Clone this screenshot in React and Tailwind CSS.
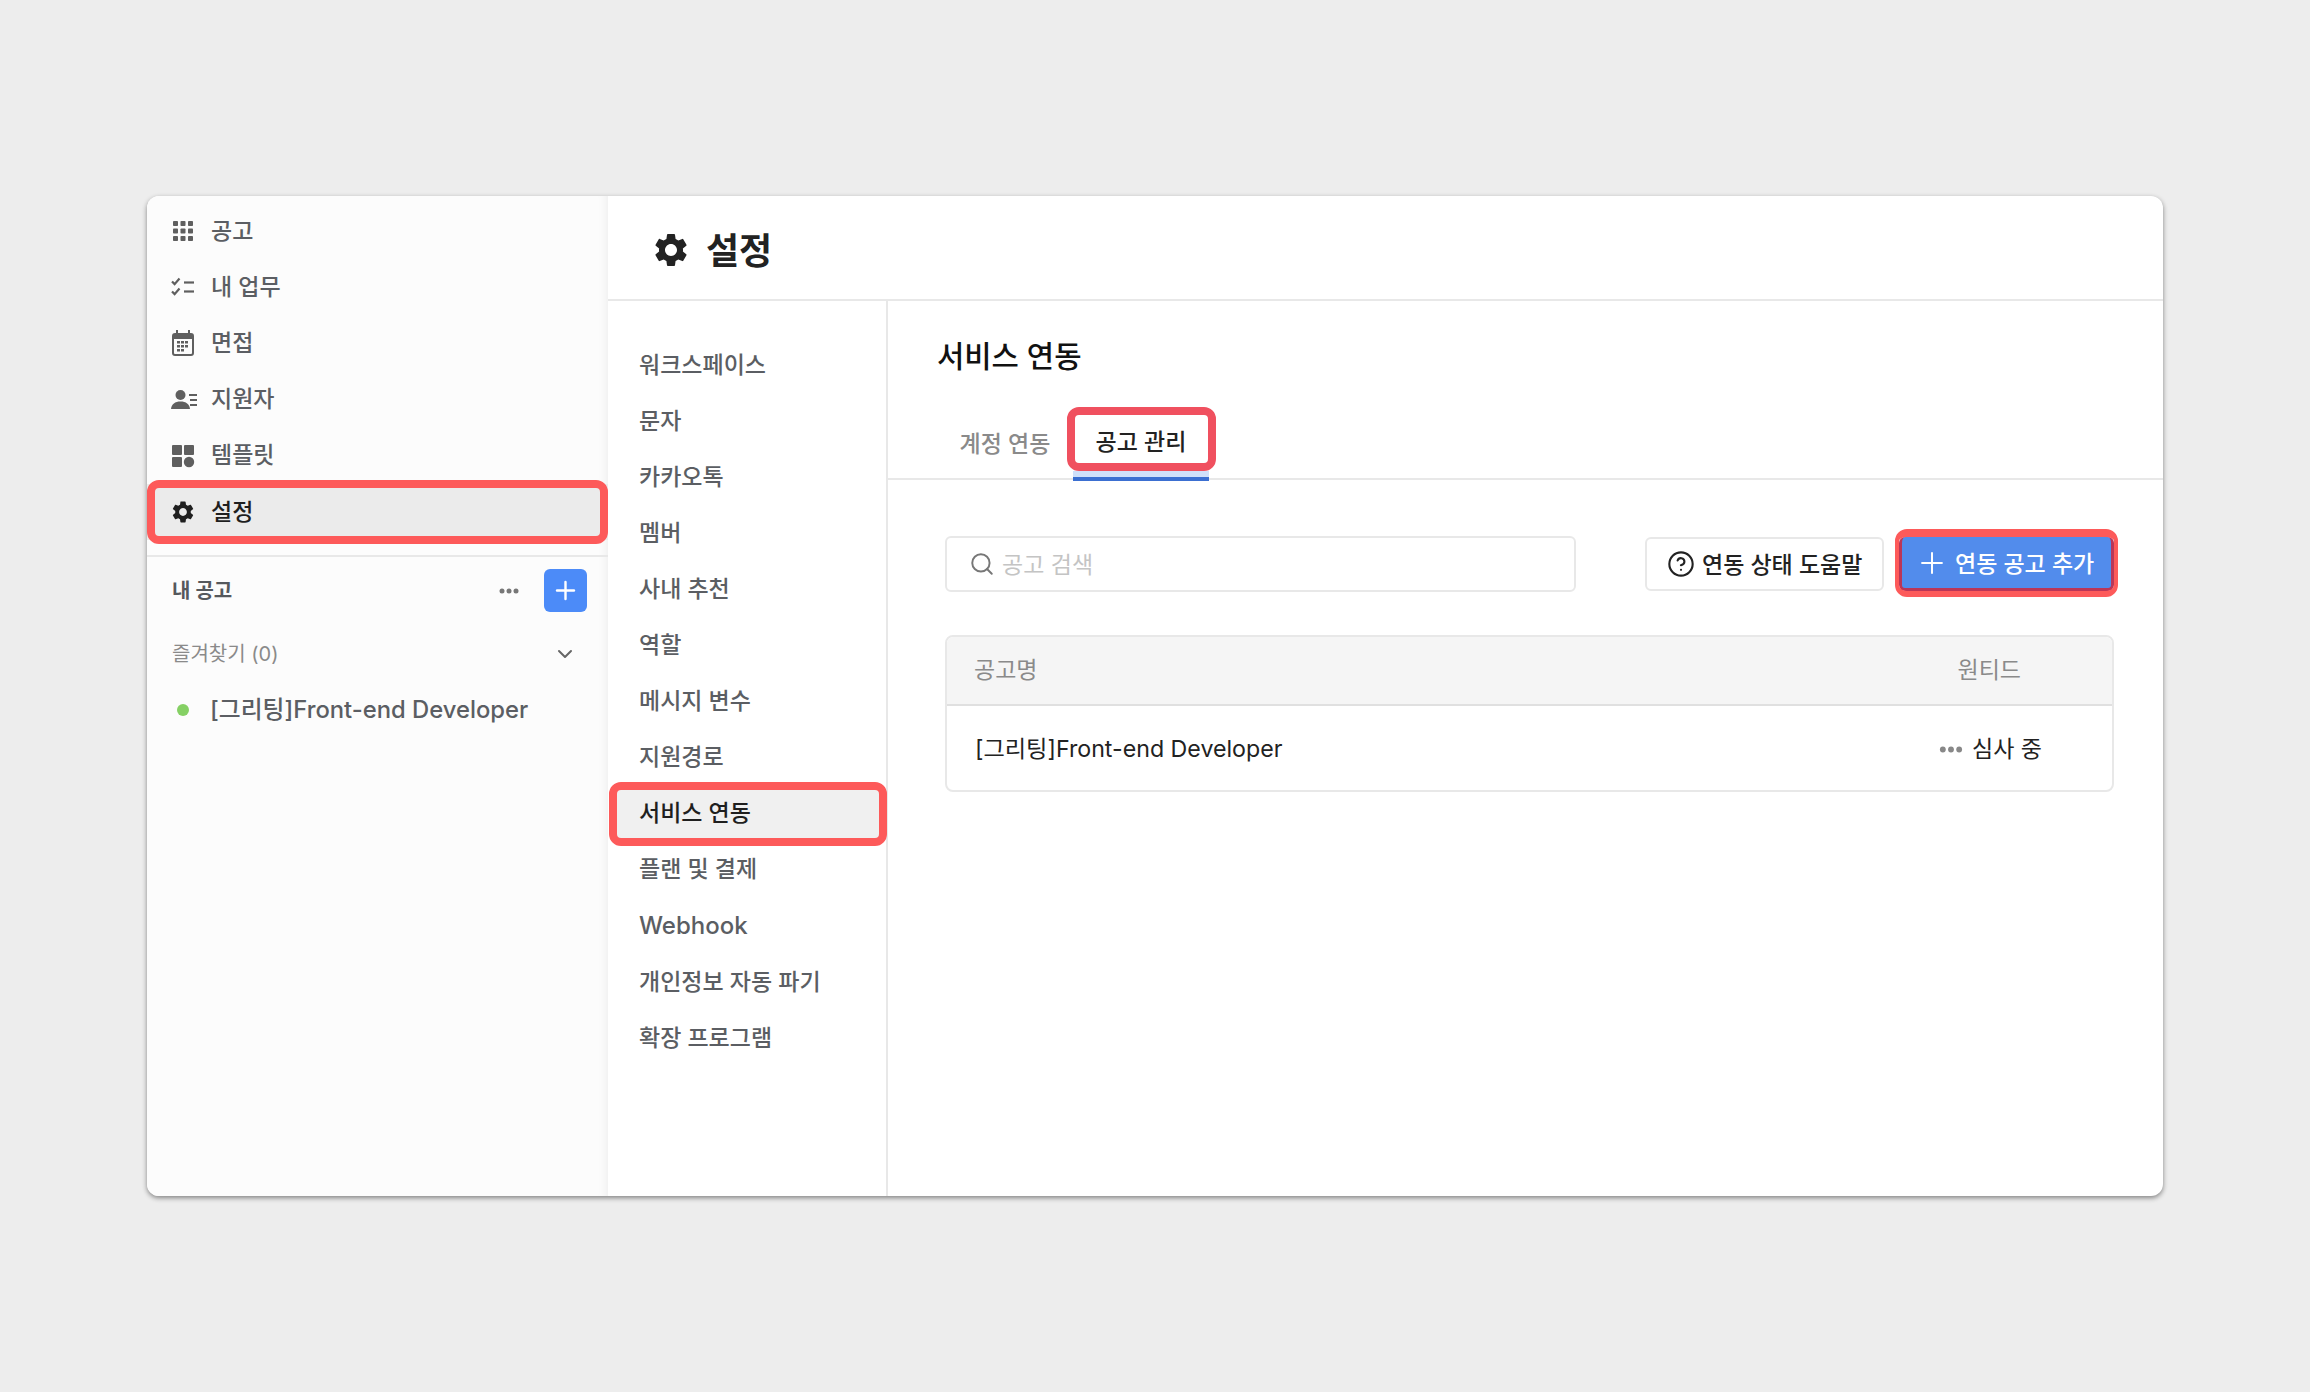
import { Search, CircleHelp, Plus, ChevronDown } from "lucide-react"
import { MdSettings } from "react-icons/md"

const GridIcon = () => (
  <svg width="24" height="24" viewBox="0 0 24 24" fill="currentColor">
    {[2, 9.5, 17].map((y) =>
      [2, 9.5, 17].map((x) => <rect key={`${x}-${y}`} x={x} y={y} width="5" height="5" rx="0.8" />)
    )}
  </svg>
)

const TaskIcon = () => (
  <svg width="24" height="24" viewBox="0 0 24 24" fill="none" stroke="currentColor" strokeWidth="2.2">
    <path d="M1 6.5l2.6 2.6L8.5 3.5" />
    <path d="M1 16.5l2.6 2.6L8.500 13.5" />
    <path d="M13 7.5h10" />
    <path d="M13 16.5h10" />
  </svg>
)

const CalendarIcon = () => (
  <svg width="24" height="26" viewBox="0 0 24 26" fill="currentColor">
    <path fillRule="evenodd" d="M5 0h2v3h10V0h2v3h1a3 3 0 0 1 3 3v17a3 3 0 0 1-3 3H4a3 3 0 0 1-3-3V6a3 3 0 0 1 3-3h1V0zM3 9v14a1 1 0 0 0 1 1h16a1 1 0 0 0 1-1V9H3z" />
    {[7, 11, 15].map((x) =>
      [12, 16, 20].map((y) => (y === 20 && x === 15 ? null : <rect key={`${x}-${y}`} x={x - 1} y={y - 1} width="3" height="2.5" />))
    )}
  </svg>
)

const ApplicantIcon = () => (
  <svg width="27" height="24" viewBox="0 0 27 24" fill="currentColor">
    <circle cx="9.5" cy="7" r="5" />
    <path d="M0 21c.5-5 4-7.500 9.500-7.500S18.500 16 19 21z" />
    <rect x="18" y="6" width="8" height="2" />
    <rect x="19" y="11" width="7" height="2" />
    <rect x="19" y="16" width="7" height="2" />
  </svg>
)

const TemplateIcon = () => (
  <svg width="24" height="24" viewBox="0 0 24 24" fill="currentColor">
    <rect x="1" y="1" width="10" height="10" rx="1" />
    <rect x="13" y="1" width="10" height="10" rx="1" />
    <rect x="1" y="13" width="10" height="10" rx="1" />
    <circle cx="18" cy="18" r="5.200" />
  </svg>
)

const Dots = ({ className }) => (
  <svg className={className} viewBox="0 0 20 6" fill="currentColor">
    <circle cx="3" cy="3" r="2.500" />
    <circle cx="10" cy="3" r="2.500" />
    <circle cx="17" cy="3" r="2.500" />
  </svg>
)

const menus = [
  { label: "공고", icon: <GridIcon /> },
  { label: "내 업무", icon: <TaskIcon /> },
  { label: "면접", icon: <CalendarIcon /> },
  { label: "지원자", icon: <ApplicantIcon /> },
  { label: "템플릿", icon: <TemplateIcon /> },
]

const settings = [
  "워크스페이스",
  "문자",
  "카카오톡",
  "멤버",
  "사내 추천",
  "역할",
  "메시지 변수",
  "지원경로",
  "서비스 연동",
  "플랜 및 결제",
  "Webhook",
  "개인정보 자동 파기",
  "확장 프로그램",
]

export default function App() {
  return (
    <div className="w-[2310px] h-[1392px] bg-[#ededed] pt-[196px] pl-[147px] font-[Inter,'Noto_Sans_CJK_KR',sans-serif] text-[23px] leading-none">
      <div className="flex w-[2016px] h-[1000px] bg-white rounded-xl shadow-[0_2px_5px_rgba(0,0,0,0.45)]">
        {/* Left sidebar */}
        <aside className="w-[461px] shrink-0 bg-[#fcfcfc] rounded-l-xl pt-[7px] shadow-[inset_-12px_0_12px_-12px_rgba(0,0,0,0.08)]">
          {menus.map((m) => (
            <div key={m.label} className="flex items-center h-[56.2px] pl-[24px] font-medium text-[#5b5e63]">
              <div className="w-[40px] h-[28px] flex items-center text-[#5f5f5f]">{m.icon}</div>
              {m.label}
            </div>
          ))}
          <div className="relative flex items-center h-[56.2px] pl-[24px] font-medium text-[#1f1f1f] bg-[#ebebeb]">
            <div className="w-[40px] flex items-center">
              <MdSettings size={26} className="-ml-[1px]" />
            </div>
            설정
            <div className="absolute inset-x-0 -inset-y-1 border-8 border-[#fd5a5a] rounded-xl" />
          </div>

          <div className="mt-[15px] border-t-2 border-[#e8e8e8] pt-[12px] pl-[25px] pr-[21px]">
            <div className="flex items-center justify-between h-[43px]">
              <span className="text-[20px] font-semibold text-[#55585c]">내 공고</span>
              <div className="flex items-center gap-[25px]">
                <Dots className="w-[20px] h-[6px] text-[#777]" />
                <button className="w-[43px] h-[43px] flex items-center justify-center rounded-md bg-[#4c8bf8] text-white">
                  <Plus size={29} strokeWidth={2} />
                </button>
              </div>
            </div>
            <div className="flex items-center justify-between h-[24px] mt-[30px] pr-[10px] text-[20px] text-[#8a8a8a]">
              <span>즐겨찾기 (0)</span>
              <ChevronDown size={24} className="text-[#666]" />
            </div>
            <div className="flex items-center h-[24px] mt-[32px] text-[23.8px] font-medium text-[#5b5e63]">
              <span className="w-[12px] h-[12px] ml-[5px] mr-[21px] rounded-full bg-[#85d064]" />
              [그리팅]Front-end Developer
            </div>
          </div>
        </aside>

        {/* Main */}
        <main className="flex-1 flex flex-col min-w-0">
          <header className="flex items-center h-[105px] shrink-0 border-b-2 border-[#e8e8e8] pl-[43px]">
            <MdSettings size={40} className="text-[#222] mr-[15px] mt-[4px]" />
            <h1 className="text-[36px] font-bold text-[#222] mt-[6px]">설정</h1>
          </header>

          <div className="flex flex-1 min-h-0">
            <nav className="w-[280px] shrink-0 border-r-2 border-[#e8e8e8] pt-[36px] pl-[9px] pr-[7px]">
              {settings.map((s) => (
                <div
                  key={s}
                  className={
                    s === "서비스 연동"
                      ? "relative flex items-center h-[56.1px] pl-[22px] font-medium text-[#1f1f1f] bg-[#f0f0f0]"
                      : s === "Webhook"
                      ? "flex items-center h-[56.1px] pl-[22px] text-[24px] font-medium text-[#5b5e63]"
                      : "flex items-center h-[56.1px] pl-[22px] font-medium text-[#5b5e63]"
                  }
                >
                  {s}
                  {s === "서비스 연동" && (
                    <div className="absolute -inset-x-2 -inset-y-1 border-8 border-[#fd5a5a] rounded-xl" />
                  )}
                </div>
              ))}
            </nav>

            <section className="flex-1 min-w-0">
              <div className="border-b-2 border-[#e8e8e8] pt-[36px] pl-[49px]">
                <h2 className="flex items-center h-[40px] mb-[38px] text-[29.7px] font-medium text-[#111]">서비스 연동</h2>
                <div className="flex -mb-[3px]">
                  <div className="flex items-center justify-center w-[136px] h-[66px] pb-[8px] font-medium text-[#8a8a8a]">계정 연동</div>
                  <div className="relative flex items-center justify-center w-[136px] h-[66px] pb-[8px] border-b-4 border-[#3b6fd1] font-medium text-[#222]">
                    공고 관리
                    <div className="absolute inset-x-0 bottom-0 h-[6px] bg-[#cfe0fa]" />
                    <div className="absolute -left-[6px] -right-[7px] -top-[8px] bottom-[6px] border-8 border-[#f0505f] rounded-xl" />
                  </div>
                </div>
              </div>

              <div className="pt-[56px] pl-[57px] pr-[49px]">
                <div className="flex items-center justify-between h-[56px]">
                  <div className="flex items-center w-[631px] h-[56px] pl-[22px] border-2 border-[#e8e8e8] rounded-md">
                    <Search size={26} strokeWidth={1.8} className="text-[#777] mr-[7px]" />
                    <span className="text-[#c4c4c4] pt-[2px]">공고 검색</span>
                  </div>
                  <div className="flex items-center gap-[15px]">
                    <button className="flex items-center w-[239px] h-[54px] pl-[20px] gap-[7px] border-2 border-[#e8e8e8] rounded-md font-medium text-[#222]">
                      <CircleHelp size={28} strokeWidth={1.8} />
                      <span className="pt-[3px]">연동 상태 도움말</span>
                    </button>
                    <div className="relative">
                      <button className="flex items-center w-[215px] h-[54px] pl-[13px] gap-[6px] bg-[#528cec] border-x-[3px] border-b-[3px] border-[#bb3658] rounded-md font-medium text-white">
                        <Plus size={34} strokeWidth={1.4} />
                        <span className="pt-[4px]">연동 공고 추가</span>
                      </button>
                      <div className="absolute -inset-x-1 -top-2 -bottom-1.5 border-x-4 border-t-8 border-b-[6px] border-[#fd5a5a] rounded-xl" />
                    </div>
                  </div>
                </div>

                <div className="mt-[43px] border-2 border-[#e8e8e8] rounded-lg overflow-hidden">
                  <div className="flex items-center justify-between h-[69px] bg-[#f5f5f5] border-b-2 border-[#e0e0e0] pl-[27px] pr-[91px] text-[#8a8a8a]">
                    <span>공고명</span>
                    <span>원티드</span>
                  </div>
                  <div className="flex items-center justify-between h-[84px] pt-[3px] pl-[28px] pr-[70px] text-[#222]">
                    <span className="text-[23.2px]">[그리팅]Front-end Developer</span>
                    <span className="flex items-center gap-[9px]">
                      <Dots className="w-[24px] h-[7px] text-[#888]" />
                      심사 중
                    </span>
                  </div>
                </div>
              </div>
            </section>
          </div>
        </main>
      </div>
    </div>
  )
}
